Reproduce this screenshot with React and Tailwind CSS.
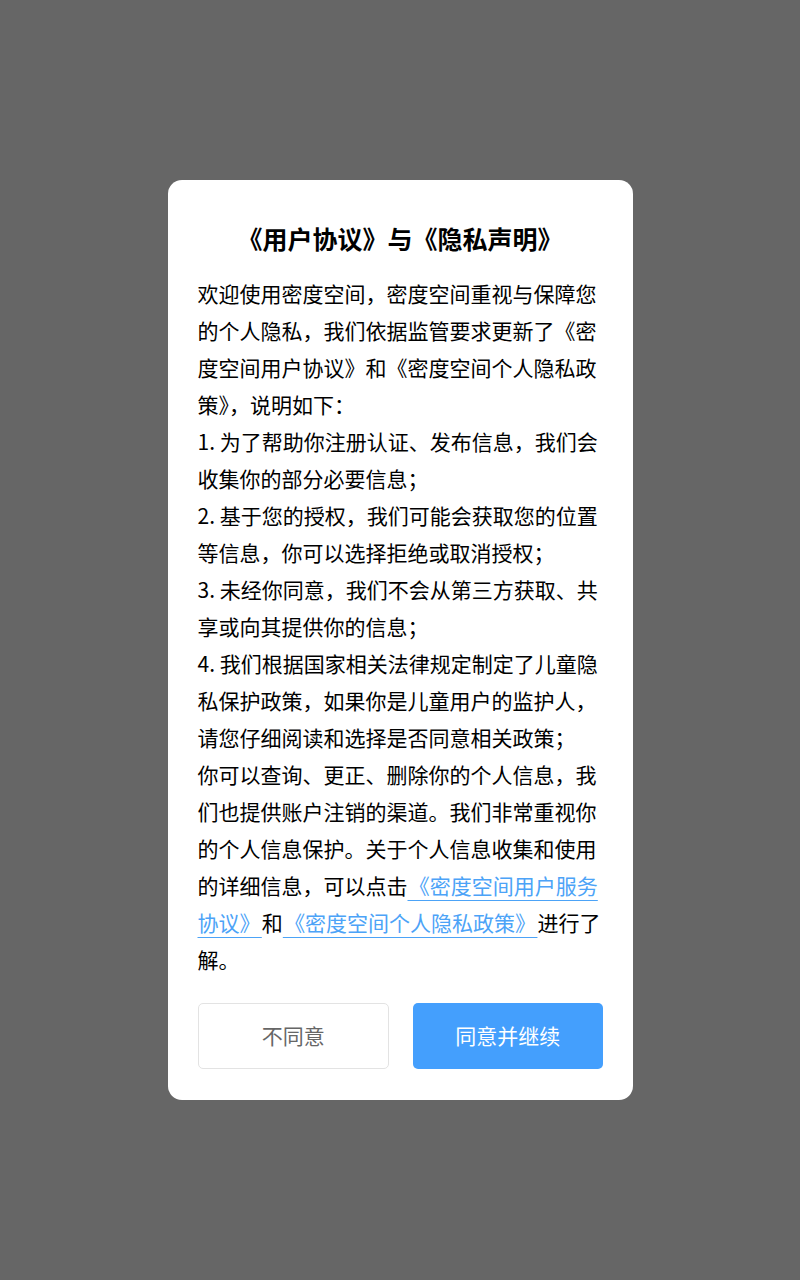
import React from "react";

export default function App() {
  const font = { fontFamily: '"Noto Sans CJK SC", "Noto Sans", sans-serif' };
  return (
    <div className="min-h-[1280px] w-full bg-[#666666] flex items-start justify-center pt-[180px]" style={font}>
      <div className="w-[465px] bg-white rounded-[14px] pl-[30px] pr-[24px] pt-[42px] pb-[31px]">
        <h2 className="pr-[6px] text-center text-[25px] leading-[32px] font-bold text-black">
          《用户协议》与《隐私声明》
        </h2>
        <div className="mt-[21px] text-[21px] leading-[37px] text-black">
          <p>
            欢迎使用密度空间，密度空间重视与保障您的个人隐私，我们依据监管要求更新了《密度空间用户协议》和《密度空间个人隐私政策》，说明如下：
          </p>
          <p>1. 为了帮助你注册认证、发布信息，我们会收集你的部分必要信息；</p>
          <p>2. 基于您的授权，我们可能会获取您的位置等信息，你可以选择拒绝或取消授权；</p>
          <p>3. 未经你同意，我们不会从第三方获取、共享或向其提供你的信息；</p>
          <p>4. 我们根据国家相关法律规定制定了儿童隐私保护政策，如果你是儿童用户的监护人，请您仔细阅读和选择是否同意相关政策；</p>
          <p>
            你可以查询、更正、删除你的个人信息，我们也提供账户注销的渠道。我们非常重视你的个人信息保护。关于个人信息收集和使用的详细信息，可以点击
            <a className="text-[#4ca3f7] underline underline-offset-[6px] decoration-1">{"\u200A《密度空间用户服务协议》\u200A"}</a>
            和
            <a className="text-[#4ca3f7] underline underline-offset-[6px] decoration-1">{"\u200A《密度空间个人隐私政策》\u200A"}</a>
            进行了解。
          </p>
        </div>
        <div className="mt-[25px] mr-[6px] flex gap-[24px]">
          <button className="flex-1 h-[66px] rounded-[5px] border border-[#e3e3e3] bg-white text-[21px] text-[#666666]">
            不同意
          </button>
          <button className="flex-1 h-[66px] rounded-[5px] bg-[#449ffd] text-[21px] text-white">
            同意并继续
          </button>
        </div>
      </div>
    </div>
  );
}
